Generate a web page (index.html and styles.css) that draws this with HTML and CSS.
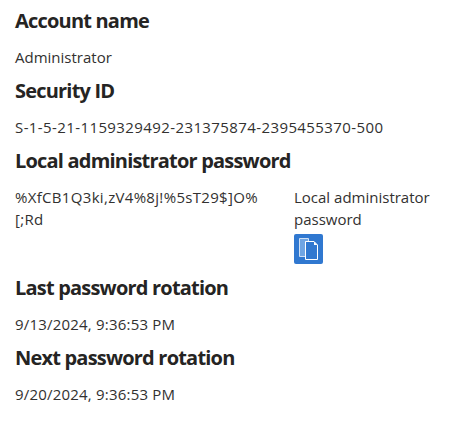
FILE: index.html
```html
<!DOCTYPE html>
<html lang="en">
<head>
<meta charset="utf-8">
<title>Local administrator password</title>
<link rel="stylesheet" href="styles.css">
</head>
<body>
<main class="panel">
  <section class="field">
    <h2 class="label">Account name</h2>
    <p class="value">Administrator</p>
  </section>
  <section class="field">
    <h2 class="label">Security ID</h2>
    <p class="value numeric">S-1-5-21-1159329492-231375874-2395455370-500</p>
  </section>
  <section class="field field-password">
    <h2 class="label">Local administrator password</h2>
    <div class="password-row">
      <p class="value password">%XfCB1Q3ki,zV4%8j!%5sT29$]O%[;Rd</p>
      <div class="copy">
        <span class="copy-label">Local administrator password</span>
        <button class="copy-btn" type="button" aria-label="Copy">
          <svg width="29" height="30" viewBox="0 0 29 30" aria-hidden="true">
            <path d="M14.5 4.5H5.5V22.5H11.5V7.5H14.5Z" fill="#6fa5e3" stroke="#cfe0f5" stroke-width="1"/>
            <path d="M11.5 7.5H20L23.5 11V25.5H11.5Z" fill="#3078d0" stroke="#ffffff" stroke-width="1"/>
            <path d="M20 7.5V11H23.5Z" fill="#ffffff"/>
          </svg>
        </button>
      </div>
    </div>
  </section>
  <section class="field">
    <h2 class="label">Last password rotation</h2>
    <p class="value date">9/13/2024, 9:36:53 PM</p>
  </section>
  <section class="field">
    <h2 class="label">Next password rotation</h2>
    <p class="value date">9/20/2024, 9:36:53 PM</p>
  </section>
</main>
</body>
</html>
```

FILE: styles.css
```css
html, body {
  margin: 0;
  padding: 0;
  background: #ffffff;
}

body {
  font-family: "Open Sans", "Noto Sans", sans-serif;
  color: #252423;
}

.panel {
  padding: 7px 15px 0;
  display: flex;
  flex-direction: column;
}

.field {
  height: 70px;
}

.field-password {
  height: 127px;
}

.label {
  margin: 0;
  font-size: 20px;
  line-height: 28px;
  font-weight: 700;
  letter-spacing: -0.8px;
  color: #252423;
}

.value {
  margin: 11px 0 0;
  font-size: 15px;
  line-height: 22px;
  color: #323130;
}

.numeric {
  letter-spacing: 0.4px;
}

.date {
  letter-spacing: 0.2px;
}

.password-row {
  display: grid;
  grid-template-columns: 279px 1fr;
  margin-top: 11px;
}

.password {
  margin: 0;
  width: 244px;
  letter-spacing: 0.32px;
  word-break: break-all;
}

.copy {
  font-size: 15px;
  line-height: 22px;
  color: #323130;
}

.copy-label {
  display: block;
}

.copy-btn {
  display: block;
  width: 29px;
  height: 30px;
  margin-top: 4px;
  padding: 0;
  border: 0;
  border-radius: 2px;
  background: #3078d0;
}

.copy-btn svg {
  display: block;
}
```
